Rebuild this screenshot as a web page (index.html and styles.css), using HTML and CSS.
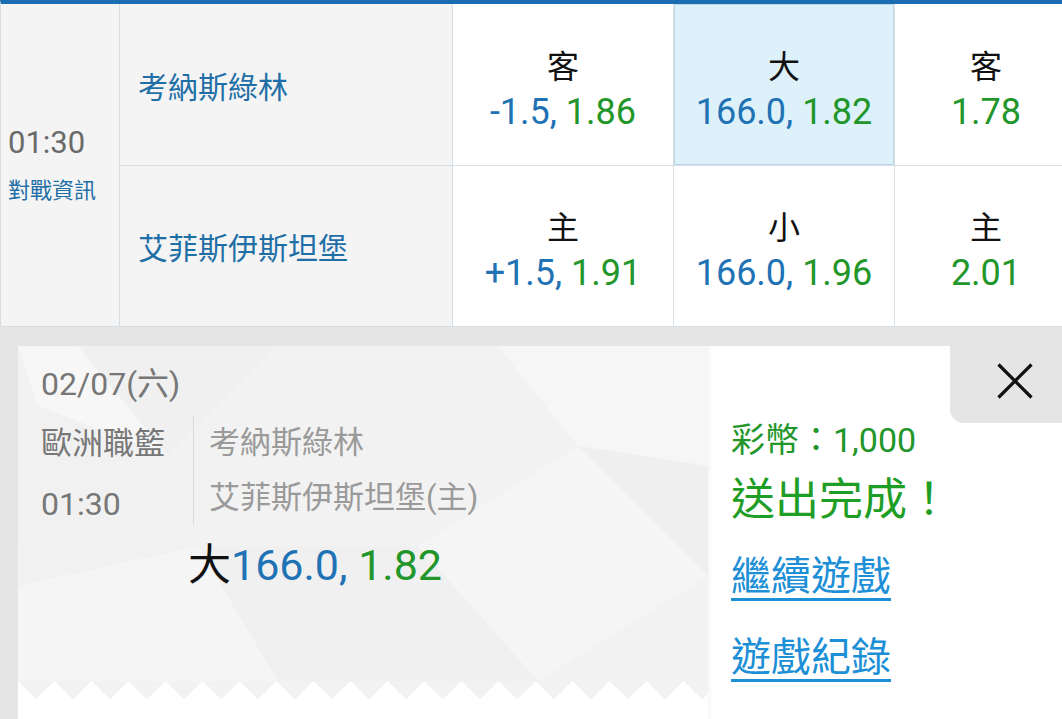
FILE: index.html
```html
<!DOCTYPE html>
<html lang="zh-Hant">
<head>
<meta charset="utf-8">
<title>投注</title>
<link rel="stylesheet" href="styles.css">
</head>
<body>
<div class="board">
  <div class="grid">
    <div class="cell time-cell">
      <div class="time">01:30</div>
      <div class="info">對戰資訊</div>
    </div>
    <div class="cell team">考納斯綠林</div>
    <div class="cell odds"><div class="lbl">客</div><div class="num"><span class="b">-1.5,</span> <span class="g">1.86</span></div></div>
    <div class="cell odds active"><div class="lbl">大</div><div class="num"><span class="b">166.0,</span> <span class="g">1.82</span></div></div>
    <div class="cell odds"><div class="lbl">客</div><div class="num"><span class="g">1.78</span></div></div>
    <div class="cell team">艾菲斯伊斯坦堡</div>
    <div class="cell odds"><div class="lbl">主</div><div class="num"><span class="b">+1.5,</span> <span class="g">1.91</span></div></div>
    <div class="cell odds"><div class="lbl">小</div><div class="num"><span class="b">166.0,</span> <span class="g">1.96</span></div></div>
    <div class="cell odds"><div class="lbl">主</div><div class="num"><span class="g">2.01</span></div></div>
  </div>
</div>

<div class="slip-wrap">
  <div class="slip">
    <div class="slip-left">
      <div class="slip-main">
        <svg class="poly" width="690" height="335" viewBox="0 0 690 335" aria-hidden="true">
          <polygon points="0,0 60,0 150,110 20,60" fill="#f7f7f7"/>
          <polygon points="150,110 60,0 260,0" fill="#f0f0f0"/>
          <polygon points="480,0 690,0 690,120 560,100" fill="#f6f6f6"/>
          <polygon points="560,100 690,120 690,230" fill="#efefef"/>
          <polygon points="400,200 560,100 690,230 520,335" fill="#f5f5f5"/>
          <polygon points="0,240 180,200 260,335 0,335" fill="#f5f5f5"/>
          <polygon points="180,200 400,200 520,335 260,335" fill="#f0f0f0"/>
          <polygon points="20,60 150,110 180,200 0,240" fill="#f1f1f1"/>
        </svg>
        <div class="slip-content">
          <div class="date">02/07(六)</div>
          <div class="match">
            <div class="league">
              <div class="l-line">歐洲職籃</div>
              <div class="l-line">01:30</div>
            </div>
            <div class="teams">
              <div class="t-line">考納斯綠林</div>
              <div class="t-line">艾菲斯伊斯坦堡(主)</div>
            </div>
          </div>
          <div class="pick"><span class="k">大</span><span class="b">166.0,</span> <span class="g">1.82</span></div>
        </div>
      </div>
      <div class="zigzag"></div>
      <div class="slip-foot"></div>
    </div>
    <div class="slip-right">
      <button class="close" aria-label="關閉">
        <svg width="36" height="36" viewBox="0 0 36 36"><path d="M1.5 1.5 L34.5 34.5 M34.5 1.5 L1.5 34.5" stroke="#111" stroke-width="3.2" fill="none"/></svg>
      </button>
      <div class="coins">彩幣：1,000</div>
      <div class="done">送出完成！</div>
      <a class="link first" href="#">繼續遊戲</a>
      <a class="link second" href="#">遊戲紀錄</a>
    </div>
  </div>
</div>
</body>
</html>
```

FILE: styles.css
```css
html, body {
  margin: 0;
  padding: 0;
}
body {
  width: 1062px;
  height: 719px;
  overflow: hidden;
  background: #e5e5e5;
  font-family: Roboto, "Noto Sans CJK TC", "Noto Sans", sans-serif;
}

.board {
  border-top: 4px solid #1a6db1;
  border-left: 1px solid #d9dde0;
  background: #d7dee4;
  width: 1100px;
}
.grid {
  display: grid;
  grid-template-columns: 118px 332px 220px 220px 182px;
  grid-template-rows: 161px 160px;
  gap: 1px;
  border-bottom: 1px solid #d7dee4;
}
.cell {
  background: #fff;
  display: flex;
  flex-direction: column;
  justify-content: center;
}
.time-cell {
  grid-row: 1 / span 2;
  background: #f4f4f4;
  padding-left: 7px;
}
.time {
  font-size: 31px;
  line-height: 36px;
  color: #6a6a6a;
}
.info {
  margin-top: 15px;
  font-size: 22px;
  line-height: 30px;
  color: #1f6fa6;
}
.team {
  background: #f4f4f4;
  padding-left: 18px;
  font-size: 30px;
  color: #1f6fa6;
}
.odds {
  align-items: center;
  padding-top: 11px;
}
.odds.active {
  background: #ddf1fb;
  box-shadow: inset 0 0 0 1px #bcd6e8;
}
.lbl {
  font-size: 32px;
  line-height: 40px;
  color: #111;
}
.num {
  margin-top: 3px;
  font-size: 36px;
  line-height: 44px;
  white-space: nowrap;
}
.b { color: #1f72b4; }
.g { color: #22962a; }
.k { color: #111; }

.slip-wrap {
  padding: 19px 0 0 18px;
}
.slip {
  display: flex;
  height: 400px;
}
.slip-left {
  width: 690px;
  display: flex;
  flex-direction: column;
  background: #fff;
}
.slip-main {
  position: relative;
  height: 335px;
  background: #f2f2f2;
}
.poly {
  position: absolute;
  left: 0;
  top: 0;
}
.slip-content {
  position: relative;
  padding: 18px 0 0 23px;
}
.date {
  font-size: 32px;
  line-height: 40px;
  color: #777;
}
.match {
  display: flex;
  margin-top: 10px;
}
.league {
  width: 152px;
  color: #777;
  font-size: 31px;
}
.l-line {
  line-height: 60px;
}
.l-line + .l-line {
  font-size: 32px;
}
.teams {
  margin-top: 1px;
  border-left: 1px solid #dadada;
  padding-left: 15px;
  height: 110px;
  color: #9a9a9a;
  font-size: 31px;
}
.t-line {
  line-height: 55px;
}
.pick {
  margin-top: 6px;
  padding-left: 147px;
  font-size: 43px;
  line-height: 50px;
  white-space: nowrap;
}
.zigzag {
  height: 18px;
  background-color: #fff;
  background-image:
    linear-gradient(135deg, #f2f2f2 25%, transparent 25%),
    linear-gradient(225deg, #f2f2f2 25%, transparent 25%);
  background-size: 37px 37px;
  background-position: 18px 0, 18px 0;
}
.slip-foot {
  flex: 1;
  background: #fff;
}

.slip-right {
  position: relative;
  flex: 1;
  background: #fff;
  padding: 74px 0 0 23px;
  box-shadow: inset 6px 0 6px -6px rgba(0,0,0,0.08);
}
.close {
  position: absolute;
  top: 0;
  right: 0;
  width: 112px;
  height: 77px;
  border: 0;
  padding: 17px 0 0 47px;
  background: #e5e5e5;
  border-bottom-left-radius: 14px;
  display: flex;
  align-items: flex-start;
  justify-content: flex-start;
  cursor: pointer;
}
.coins {
  font-size: 34px;
  line-height: 40px;
  color: #22962a;
}
.done {
  margin-top: 12px;
  font-size: 44px;
  line-height: 56px;
  color: #1f9e26;
}
.link {
  display: block;
  width: max-content;
  font-size: 40px;
  line-height: 56px;
  color: #1d8fd6;
  text-decoration: underline;
  text-decoration-thickness: 3px;
  text-underline-offset: 8px;
}
.link.first { margin-top: 21px; }
.link.second { margin-top: 25px; }
```
